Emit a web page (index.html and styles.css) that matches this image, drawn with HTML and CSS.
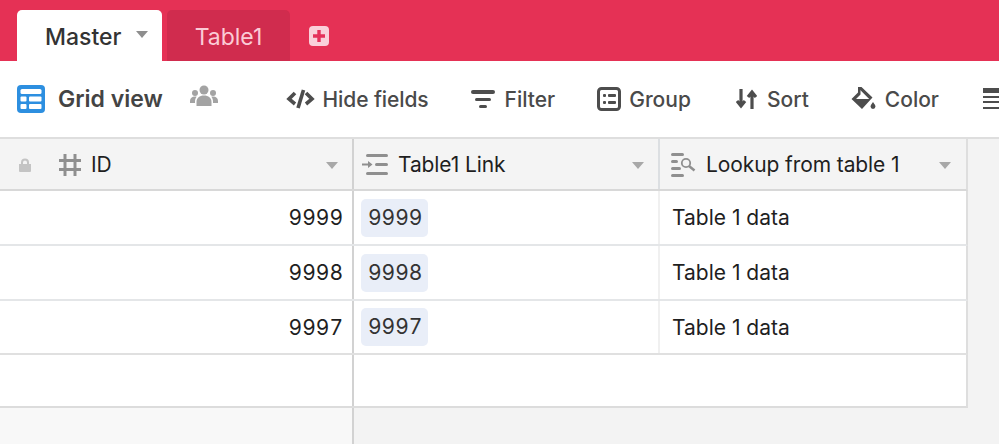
FILE: index.html
```html
<!DOCTYPE html>
<html lang="en">

<head>
    <meta charset="UTF-8">
    <meta name="viewport" content="width=device-width, initial-scale=1.0">
    <title>Master - Grid view</title>
    <link rel="stylesheet" href="styles.css">
</head>

<body>
    <div class="tabbar">
        <div class="tab tab-active">
            <span>Master</span>
            <i class="caret caret-tab"></i>
        </div>
        <div class="tab tab-other">Table1</div>
        <svg class="tab-add" width="22" height="22" viewBox="0 0 22 22">
            <rect x="1" y="1" width="20" height="20" rx="4" fill="#fad0da" />
            <path d="M11 5v12M5 11h12" stroke="#e5315a" stroke-width="3.4" />
        </svg>
    </div>

    <div class="toolbar">
        <div class="view-name">
            <svg width="28" height="28" viewBox="0 0 28 28">
                <rect x="0" y="0" width="28" height="28" rx="4" fill="#2d8fe0" />
                <rect x="3.5" y="4" width="21" height="5" rx="1.5" fill="#fff" />
                <rect x="3.5" y="11.5" width="6" height="5" rx="1" fill="#fff" />
                <rect x="12" y="11.5" width="12.5" height="5" rx="1" fill="#fff" />
                <rect x="3.5" y="19" width="6" height="5" rx="1" fill="#fff" />
                <rect x="12" y="19" width="12.5" height="5" rx="1" fill="#fff" />
            </svg>
            <span>Grid view</span>
            <svg class="people" width="28" height="22" viewBox="0 0 28 22" fill="#a3a3a3">
                <circle cx="14" cy="5" r="4.5" />
                <circle cx="5" cy="8" r="3" />
                <circle cx="23" cy="8" r="3" />
                <path d="M6.5 21v-4c0-4 3-6.500 7.500-6.500s7.500 2.500 7.500 6.500v4z" />
                <path d="M0 18v-2c0-3 2-4.500 5-4.500 .6 0 1.200 .1 1.700 .2-1.200 1.300-1.700 3-1.700 5V18zM28 18v-2c0-3-2-4.500-5-4.500-.6 0-1.200 .1-1.700 .2 1.200 1.300 1.700 3 1.700 5V18z" />
            </svg>
        </div>
        <div class="tools">
            <div class="tool tool-hide">
                <svg width="30" height="20" viewBox="0 0 30 20" fill="none" stroke="#4d4d4d" stroke-width="3.600">
                    <path d="M9 4L3 10l6 5M20 4l6 6-6 5" />
                    <path d="M17.500 1L12 19" />
                </svg>
                <span>Hide fields</span>
            </div>
            <div class="tool tool-filter">
                <svg width="24" height="20" viewBox="0 0 24 20" fill="#4d4d4d">
                    <rect x="0" y="1" width="24" height="4" rx="2" />
                    <rect x="4" y="9" width="16" height="3" rx="1.500" />
                    <rect x="8" y="16" width="8" height="3" rx="1.500" />
                </svg>
                <span>Filter</span>
            </div>
            <div class="tool tool-group">
                <svg width="24" height="24" viewBox="0 0 24 24">
                    <rect x="1.500" y="1.500" width="21" height="21" rx="3" fill="none" stroke="#4d4d4d" stroke-width="3" />
                    <rect x="6" y="7" width="3" height="3" rx="1" fill="#4d4d4d" />
                    <rect x="11" y="7" width="8" height="3" rx="1" fill="#4d4d4d" />
                    <rect x="6" y="14" width="3" height="3" rx="1" fill="#4d4d4d" />
                    <rect x="11" y="14" width="8" height="3" rx="1" fill="#4d4d4d" />
                </svg>
                <span>Group</span>
            </div>
            <div class="tool tool-sort">
                <svg width="21" height="22" viewBox="0 0 21 22" fill="none" stroke="#4d4d4d" stroke-width="3.200">
                    <path d="M5 1v17M1 13l4 5 4-5" />
                    <path d="M16 21V4M12 9l4-5 4 5" />
                </svg>
                <span>Sort</span>
            </div>
            <div class="tool tool-color">
                <svg width="25" height="25" viewBox="0 0 25 25" fill="#4d4d4d">
                    <path d="M8 0l2.500 0 11 10.500L11 22 .5 12 7 5.500V0zM9.500 3v4.500L5 12h13.200l-8-8z" fill-rule="evenodd" />
                    <path d="M22 15c1.500 2 2.400 3.300 2.400 4.500a2.400 2.400 0 0 1-4.800 0c0-1.200 .9-2.500 2.400-4.500z" />
                </svg>
                <span>Color</span>
            </div>
            <svg class="tool-more" width="16" height="22" viewBox="0 0 16 22" fill="#4d4d4d">
                <rect x="0" y="0" width="16" height="5" />
                <rect x="0" y="8" width="16" height="2" />
                <rect x="0" y="13" width="16" height="2" />
                <rect x="0" y="19" width="16" height="2" />
            </svg>
        </div>
    </div>

    <div class="grid">
        <div class="row row-head">
            <div class="cell cell-id">
                <svg class="lock" width="14" height="14" viewBox="0 0 14 14" fill="#c4c4c4">
                    <path d="M1 6h12v7a1 1 0 0 1-1 1H2a1 1 0 0 1-1-1zM3 6V4.500a4 4 0 0 1 8 0V6H9V4.500a2 2 0 0 0-4 0V6z" />
                </svg>
                <svg class="field-icon" width="24" height="24" viewBox="0 0 24 24" fill="none" stroke="#8f8f8f" stroke-width="3">
                    <path d="M7 1v22M17 1v22M1 7.500h22M1 16.500h22" />
                </svg>
                <span class="field-name">ID</span>
                <i class="caret"></i>
            </div>
            <div class="cell cell-link">
                <svg class="field-icon" width="26" height="22" viewBox="0 0 26 22" fill="#8f8f8f">
                    <rect x="4" y="0" width="22" height="3" rx="1.500" />
                    <rect x="13" y="9" width="13" height="3" rx="1.500" />
                    <rect x="4" y="18" width="22" height="3" rx="1.500" />
                    <path d="M0 9.500h6V7l4.500 3.500L6 14v-2.500H0z" />
                </svg>
                <span class="field-name">Table1 Link</span>
                <i class="caret"></i>
            </div>
            <div class="cell cell-lookup">
                <svg class="field-icon" width="25" height="24" viewBox="0 0 25 24" fill="#8f8f8f">
                    <rect x="0" y="0" width="13" height="3" rx="1.500" />
                    <rect x="0" y="7" width="7" height="3" rx="1.500" />
                    <rect x="0" y="14" width="10" height="3" rx="1.500" />
                    <rect x="0" y="21" width="13" height="3" rx="1.500" />
                    <circle cx="15" cy="10" r="4.200" fill="none" stroke="#8f8f8f" stroke-width="1.800" />
                    <path d="M18 13l5.500 4.500" stroke="#8f8f8f" stroke-width="2.500" />
                </svg>
                <span class="field-name">Lookup from table 1</span>
                <i class="caret"></i>
            </div>
        </div>

        <div class="row">
            <div class="cell cell-id num">9999</div>
            <div class="cell cell-link"><span class="pill">9999</span></div>
            <div class="cell cell-lookup">Table 1 data</div>
        </div>
        <div class="row">
            <div class="cell cell-id num">9998</div>
            <div class="cell cell-link"><span class="pill">9998</span></div>
            <div class="cell cell-lookup">Table 1 data</div>
        </div>
        <div class="row row-last">
            <div class="cell cell-id num">9997</div>
            <div class="cell cell-link"><span class="pill">9997</span></div>
            <div class="cell cell-lookup">Table 1 data</div>
        </div>
        <div class="row row-empty">
            <div class="cell cell-id"></div>
            <div class="cell cell-blank"></div>
        </div>
        <div class="grid-foot">
            <div class="foot-left"></div>
        </div>
    </div>
</body>

</html>
```

FILE: styles.css
```css
* {
    box-sizing: border-box;
}

html,
body {
    margin: 0;
    padding: 0;
    height: 444px;
    overflow: hidden;
}

body {
    font-family: Inter, "Liberation Sans", sans-serif;
    background-color: #f3f3f3;
    color: #1f1f1f;
    display: flex;
    flex-direction: column;
}

.tabbar {
    height: 61px;
    background-color: #e53155;
    display: flex;
    align-items: flex-end;
    padding-left: 17px;
}

.tab {
    height: 51px;
    border-radius: 5px 5px 0 0;
    display: flex;
    align-items: center;
    font-size: 23px;
    padding-top: 2px;
}

.tab-active {
    width: 145px;
    background-color: #fff;
    color: #333;
    font-weight: 500;
    padding-left: 28px;
}

.tab-other {
    width: 123px;
    margin-left: 5px;
    background-color: #d02c4e;
    color: #fbcbd6;
    justify-content: center;
}

.tab-add {
    margin: 0 0 14px 18px;
}

.caret {
    display: block;
    width: 0;
    height: 0;
    border-left: 6px solid transparent;
    border-right: 6px solid transparent;
    border-top: 7px solid #a8a8a8;
    margin: 2px 0 0 auto;
}

.caret-tab {
    margin: 0 0 5px 15px;
    border-top-color: #8e8e8e;
}

.toolbar {
    height: 78px;
    background-color: #fff;
    border-bottom: 2px solid #dedede;
    display: flex;
    align-items: center;
    padding: 0 0 0 17px;
    color: #4a4a4a;
    white-space: nowrap;
}

.view-name {
    width: 269px;
    display: flex;
    align-items: center;
    font-size: 23px;
    font-weight: 600;
    color: #444;
}

.view-name span {
    margin-left: 13px;
}

.people {
    margin: 0 0 7px 27px;
}

.tools {
    display: flex;
    align-items: center;
    font-size: 21px;
    font-weight: 500;
}

.tool {
    display: flex;
    align-items: center;
}

.tool span {
    margin-left: 8px;
}

.tool-hide span {
    margin-left: 7px;
    letter-spacing: -0.1px;
}

.tool-filter {
    margin-left: 42px;
}

.tool-filter span {
    margin-left: 10px;
}

.tool-group {
    margin-left: 42px;
}

.tool-sort {
    margin-left: 45px;
}

.tool-sort span {
    margin-left: 10px;
}

.tool-color {
    margin-left: 42px;
}

.tool-color span {
    margin-left: 9px;
}

.tool-more {
    margin-left: 44px;
    flex-shrink: 0;
}

.grid {
    flex: 1;
    display: flex;
    flex-direction: column;
    font-size: 21px;
}

.row {
    display: flex;
    height: 55px;
    background-color: #fff;
    width: 968px;
    border-bottom: 2px solid #e4e6e8;
    border-right: 2px solid #dedede;
}

.row-head {
    height: 52px;
    background-color: #f4f4f4;
    border-bottom-color: #d8d8d8;
}

.row-last {
    height: 54px;
    border-bottom-color: #e0e0e0;
}

.row-empty {
    height: 53px;
    border-bottom-color: #dcdcdc;
}

.cell {
    display: flex;
    align-items: center;
    height: 100%;
    flex-shrink: 0;
}

.cell-id {
    width: 354px;
    border-right: 2px solid #d2d2d2;
}

.row-head .cell-id {
    padding: 1px 14px 0 18px;
}

.num {
    justify-content: flex-end;
    padding-right: 9px;
    font-variant-numeric: tabular-nums;
}

.cell-link {
    width: 306px;
    border-right: 2px solid #f0f0f0;
    padding-left: 7px;
}

.cell-lookup {
    width: 306px;
    padding-left: 12px;
}

.cell-blank {
    flex: 1;
}

.row-head .cell-link {
    padding: 1px 14px 0 8px;
    border-right-color: #dcdfe2;
}

.row-head .cell-lookup {
    padding: 1px 15px 0 11px;
}

.lock {
    margin-right: 26px;
}

.field-icon {
    flex-shrink: 0;
}

.field-name {
    margin-left: 10px;
    white-space: nowrap;
    letter-spacing: -0.1px;
}

.cell-id .field-name {
    margin-left: 9px;
}

.pill {
    background-color: #e9eef8;
    border-radius: 5px;
    padding: 0 6px 0 7px;
    height: 38px;
    line-height: 38px;
    color: #333;
    font-variant-numeric: tabular-nums;
}

.grid-foot {
    flex: 1;
}

.foot-left {
    width: 354px;
    height: 100%;
    background-color: #f8f8f8;
    border-right: 2px solid #d2d2d2;
}
```
